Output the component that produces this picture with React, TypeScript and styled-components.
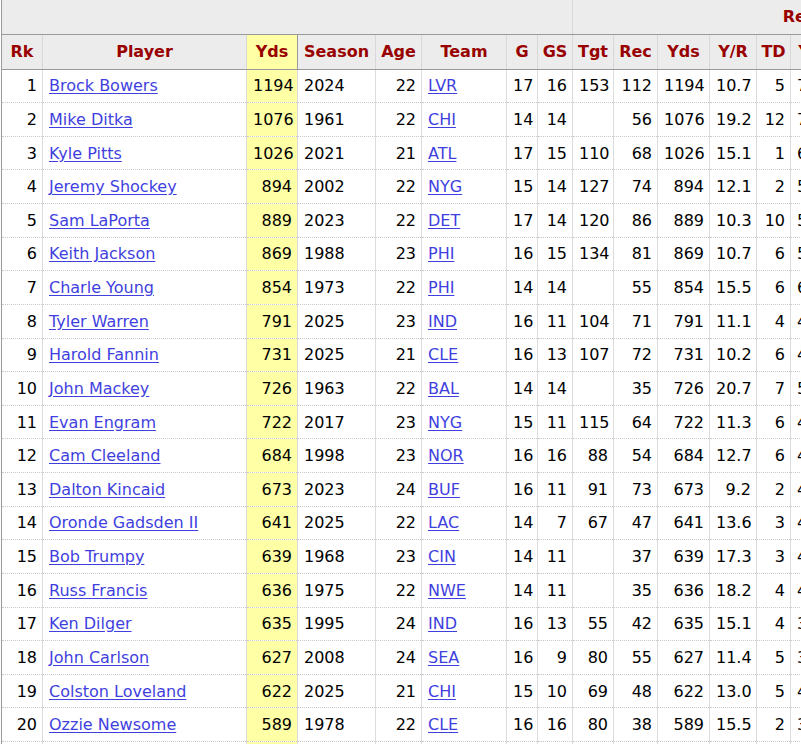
import React from "react";
import styled, { createGlobalStyle } from "styled-components";

type Row = [number, string, number, number, number, string, number, number, number | null, number, number, string, number];

const rows: Row[] = [
  [1, "Brock Bowers", 1194, 2024, 22, "LVR", 17, 16, 153, 112, 1194, "10.7", 5],
  [2, "Mike Ditka", 1076, 1961, 22, "CHI", 14, 14, null, 56, 1076, "19.2", 12],
  [3, "Kyle Pitts", 1026, 2021, 21, "ATL", 17, 15, 110, 68, 1026, "15.1", 1],
  [4, "Jeremy Shockey", 894, 2002, 22, "NYG", 15, 14, 127, 74, 894, "12.1", 2],
  [5, "Sam LaPorta", 889, 2023, 22, "DET", 17, 14, 120, 86, 889, "10.3", 10],
  [6, "Keith Jackson", 869, 1988, 23, "PHI", 16, 15, 134, 81, 869, "10.7", 6],
  [7, "Charle Young", 854, 1973, 22, "PHI", 14, 14, null, 55, 854, "15.5", 6],
  [8, "Tyler Warren", 791, 2025, 23, "IND", 16, 11, 104, 71, 791, "11.1", 4],
  [9, "Harold Fannin", 731, 2025, 21, "CLE", 16, 13, 107, 72, 731, "10.2", 6],
  [10, "John Mackey", 726, 1963, 22, "BAL", 14, 14, null, 35, 726, "20.7", 7],
  [11, "Evan Engram", 722, 2017, 23, "NYG", 15, 11, 115, 64, 722, "11.3", 6],
  [12, "Cam Cleeland", 684, 1998, 23, "NOR", 16, 16, 88, 54, 684, "12.7", 6],
  [13, "Dalton Kincaid", 673, 2023, 24, "BUF", 16, 11, 91, 73, 673, "9.2", 2],
  [14, "Oronde Gadsden II", 641, 2025, 22, "LAC", 14, 7, 67, 47, 641, "13.6", 3],
  [15, "Bob Trumpy", 639, 1968, 23, "CIN", 14, 11, null, 37, 639, "17.3", 3],
  [16, "Russ Francis", 636, 1975, 22, "NWE", 14, 11, null, 35, 636, "18.2", 4],
  [17, "Ken Dilger", 635, 1995, 24, "IND", 16, 13, 55, 42, 635, "15.1", 4],
  [18, "John Carlson", 627, 2008, 24, "SEA", 16, 9, 80, 55, 627, "11.4", 5],
  [19, "Colston Loveland", 622, 2025, 21, "CHI", 15, 10, 69, 48, 622, "13.0", 5],
  [20, "Ozzie Newsome", 589, 1978, 22, "CLE", 16, 16, 80, 38, 589, "15.5", 2],
  [21, "Rob Gronkowski", 546, 2010, 21, "NWE", 16, 11, 59, 42, 546, "13.0", 10],
];

const cols = [41, 204, 51, 78, 46, 85, 31, 35, 41, 44, 52, 47, 34, 46, 46, 68, 60, 70];

const GlobalStyle = createGlobalStyle`
  html, body {
    margin: 0;
    padding: 0;
    background: #fff;
    overflow: hidden;
  }
  body {
    font-family: "DejaVu Sans", Verdana, sans-serif;
    font-size: 16px;
    color: #000;
  }
`;

const Page = styled.div`
  width: 801px;
  height: 744px;
  overflow: hidden;
  padding-left: 1px;
  box-sizing: border-box;
`;

const Table = styled.table`
  border-collapse: collapse;
  table-layout: fixed;
  width: ${cols.reduce((a, b) => a + b, 0)}px;
  border-left: 1px solid #9a9a9a;
`;

const OverRow = styled.tr`
  background: #ececec;
`;

const OverCell = styled.th`
  height: 33.5px;
  padding: 0;
  border-right: 1px solid #d8d8d8;
  border-bottom: 1px solid #999;
  color: #900;
  font-weight: bold;
  font-size: 16px;
  text-align: center;
`;

const HeadCell = styled.th<{ $sorted?: boolean }>`
  height: 34px;
  padding: 0 4px;
  background: ${({ $sorted }) => ($sorted ? "#ffffa6" : "#ececec")};
  border-right: 1px solid ${({ $sorted }) => ($sorted ? "#999" : "#d8d8d8")};
  border-left: ${({ $sorted }) => ($sorted ? "1px solid #999" : "none")};
  border-bottom: 1px solid #999;
  color: #900;
  font-weight: bold;
  font-size: 16px;
  text-align: center;
  white-space: nowrap;
  overflow: hidden;
`;

const Cell = styled.td<{ $left?: boolean; $sorted?: boolean }>`
  height: 32.63px;
  padding: 0 5px 0 6px;
  text-align: ${({ $left }) => ($left ? "left" : "right")};
  background: ${({ $sorted }) => ($sorted ? "#ffffa6" : "transparent")};
  border-right: 1px solid #dcdcdc;
  border-bottom: 1px dotted #c8c8c8;
  white-space: nowrap;
  overflow: hidden;
`;

const Link = styled.a`
  color: #3f3fe0;
  text-decoration: underline;
  text-underline-offset: 2px;
`;

const headers = ["Rk", "Player", "Yds", "Season", "Age", "Team", "G", "GS", "Tgt", "Rec", "Yds", "Y/R", "TD", "Y/G", "R/G", "Ctch%", "Y/Tgt", "Succ%"];

export default function App() {
  return (
    <Page>
      <GlobalStyle />
      <Table>
        <colgroup>
          {cols.map((w, i) => (
            <col key={i} style={{ width: w }} />
          ))}
        </colgroup>
        <thead>
          <OverRow>
            <OverCell colSpan={8} />
            <OverCell colSpan={10}>Receiving</OverCell>
          </OverRow>
          <tr>
            {headers.map((h, i) => (
              <HeadCell key={i} $sorted={i === 2}>
                {h}
              </HeadCell>
            ))}
          </tr>
        </thead>
        <tbody>
          {rows.map((r) => {
            const [rk, name, yds, season, age, team, g, gs, tgt, rec, ryds, yr, td] = r;
            return (
              <tr key={rk}>
                <Cell>{rk}</Cell>
                <Cell $left>
                  <Link href="#">{name}</Link>
                </Cell>
                <Cell $sorted>{yds}</Cell>
                <Cell $left>{season}</Cell>
                <Cell>{age}</Cell>
                <Cell $left>
                  <Link href="#">{team}</Link>
                </Cell>
                <Cell>{g}</Cell>
                <Cell>{gs}</Cell>
                <Cell>{tgt ?? ""}</Cell>
                <Cell>{rec}</Cell>
                <Cell>{ryds}</Cell>
                <Cell>{yr}</Cell>
                <Cell>{td}</Cell>
                <Cell>{(ryds / g).toFixed(1)}</Cell>
                <Cell>{(rec / g).toFixed(1)}</Cell>
                <Cell>{tgt ? ((rec / tgt) * 100).toFixed(1) + "%" : ""}</Cell>
                <Cell>{tgt ? (ryds / tgt).toFixed(1) : ""}</Cell>
                <Cell></Cell>
              </tr>
            );
          })}
        </tbody>
      </Table>
    </Page>
  );
}
